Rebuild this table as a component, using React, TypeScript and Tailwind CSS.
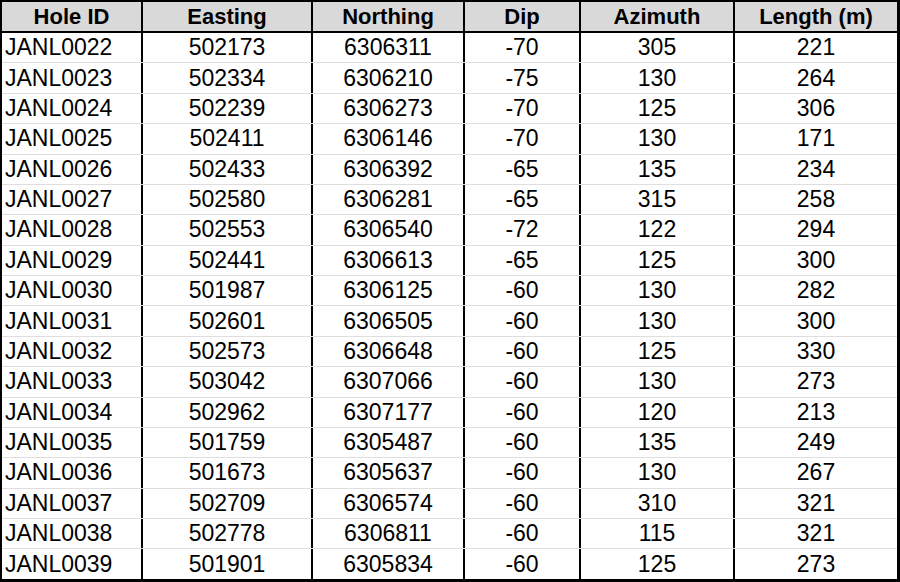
import React from 'react';

const rows: [string, number, number, number, number, number][] = [
  ['JANL0022', 502173, 6306311, -70, 305, 221],
  ['JANL0023', 502334, 6306210, -75, 130, 264],
  ['JANL0024', 502239, 6306273, -70, 125, 306],
  ['JANL0025', 502411, 6306146, -70, 130, 171],
  ['JANL0026', 502433, 6306392, -65, 135, 234],
  ['JANL0027', 502580, 6306281, -65, 315, 258],
  ['JANL0028', 502553, 6306540, -72, 122, 294],
  ['JANL0029', 502441, 6306613, -65, 125, 300],
  ['JANL0030', 501987, 6306125, -60, 130, 282],
  ['JANL0031', 502601, 6306505, -60, 130, 300],
  ['JANL0032', 502573, 6306648, -60, 125, 330],
  ['JANL0033', 503042, 6307066, -60, 130, 273],
  ['JANL0034', 502962, 6307177, -60, 120, 213],
  ['JANL0035', 501759, 6305487, -60, 135, 249],
  ['JANL0036', 501673, 6305637, -60, 130, 267],
  ['JANL0037', 502709, 6306574, -60, 310, 321],
  ['JANL0038', 502778, 6306811, -60, 115, 321],
  ['JANL0039', 501901, 6305834, -60, 125, 273],
];

const headers = ['Hole ID', 'Easting', 'Northing', 'Dip', 'Azimuth', 'Length (m)'];

const cols = 'grid grid-cols-[141px_170px_152px_116px_154px_1fr]';

export default function App() {
  return (
    <div
      className="w-[900px] h-[582px] bg-white text-black border-l-2 border-t-2 border-r-[3px] border-b-[3px] border-black overflow-hidden"
      style={{ fontFamily: '"Liberation Sans", Arial, sans-serif' }}
    >
      {/* Header */}
      <div className={`${cols} h-[31px] bg-[#d9d9d9] border-b-2 border-black`}>
        {headers.map((h, i) => (
          <div
            key={h}
            className={`flex items-center justify-center text-[22px] font-bold leading-none ${
              i < headers.length - 1 ? 'border-r-2 border-black' : ''
            }`}
          >
            {h}
          </div>
        ))}
      </div>

      {/* Body */}
      {rows.map((r, ri) => (
        <div
          key={r[0]}
          className={`${cols} h-[30.39px] ${ri < rows.length - 1 ? 'border-b border-[#dedede]' : ''}`}
        >
          {r.map((v, i) => (
            <div
              key={i}
              className={`flex items-center text-[23px] leading-none ${
                i === 0 ? 'justify-start pl-[3px]' : 'justify-center'
              } ${i < r.length - 1 ? 'border-r-2 border-black' : ''}`}
            >
              {v}
            </div>
          ))}
        </div>
      ))}
    </div>
  );
}
